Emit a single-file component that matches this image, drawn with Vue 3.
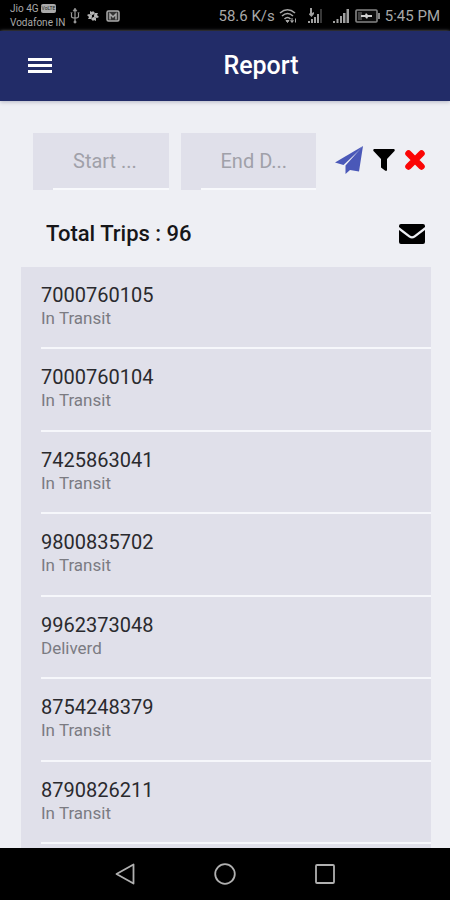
<script setup>
import { ref } from 'vue'

const startDate = ref('')
const endDate = ref('')
const trips = [
  { id: '7000760105', status: 'In Transit' },
  { id: '7000760104', status: 'In Transit' },
  { id: '7425863041', status: 'In Transit' },
  { id: '9800835702', status: 'In Transit' },
  { id: '9962373048', status: 'Deliverd' },
  { id: '8754248379', status: 'In Transit' },
  { id: '8790826211', status: 'In Transit' },
]
</script>

<template>
  <div class="screen">
    <div class="status">
      <div class="carriers">
        <div class="carrier">Jio 4G <span class="volte">VoLTE</span></div>
        <div class="carrier">Vodafone IN</div>
      </div>
      <div class="notices">
        <svg width="10" height="16" viewBox="0 0 10 16" fill="none" stroke="#999" stroke-width="1.2">
          <path d="M5 2v11M1.500 5v3.500q0 1.500 3.500 1.500t3.500-1.500V5" />
          <path d="M5 0l2 3H3zM4 13h2v2H4zM.5 4.500h2M7.500 4.500h2" fill="#999" stroke-width=".6" />
        </svg>
        <svg width="14" height="14" viewBox="0 0 14 14" fill="#b4b4b4">
          <path d="M6 6L4 5V2l2 1 1-1 2 2-2 2zM8 6l1-2h3l-1 2 2 2-2 1-3-1zM8 8l2 1v3l-2-1-1 1-2-2 2-2zM6 8l-1 2H2l1-2-2-2 2-1 3 1z" />
          <circle cx="7" cy="7" r="1.200" fill="#000" />
        </svg>
        <svg width="14" height="12" viewBox="0 0 14 12" fill="none" stroke="#aaa" stroke-width="1.500">
          <rect x="1" y="1" width="12" height="10" rx="1.500" fill="#333" />
          <path d="M4 9.500V4l3 3 3-3v5.500" />
        </svg>
      </div>
      <div class="system">
        <span>58.6 K/s</span>
        <svg width="18" height="16" viewBox="0 0 18 16" fill="none" stroke="#a8a8a8" stroke-width="1.600">
          <path d="M1 5q7.500-6.500 15 0M3 8q5.500-5 11 0M5.500 11q3-3 6 0" />
          <path d="M7 12.500h3l-1.500 2zM13 10v4M11.500 12.500L13 14.500l1.500-2M16.500 14.500v-4" stroke-width="1" fill="#a8a8a8" />
        </svg>
        <svg class="sim" width="16" height="16" viewBox="0 0 16 16" fill="#a0a0a0">
          <path d="M1 13h2v2H1zM4 11h2v4H4zM7 9h2v6H7zM10 6h2v9h-2z" />
          <path d="M13 1h2v14h-2z" fill="#383838" />
          <path d="M3 0h2v5l2-1v2L4.500 9 2 6.500V5l1 1z" />
        </svg>
        <svg class="signal" width="16" height="16" viewBox="0 0 16 16" fill="#a0a0a0">
          <path d="M0 13h2v2H0zM3.500 11h2v4h-2zM7 8h2v7H7zM10 5h2.500v10H10zM13.500 1H16v14h-2.500z" />
        </svg>
        <svg class="battery" width="26" height="14" viewBox="0 0 26 14">
          <rect x="1" y="1" width="21" height="12" rx="1" fill="#0c0c0c" stroke="#858585" stroke-width="1.600" />
          <path d="M3 3h4v8H3z" fill="#444" />
          <path d="M23 4h2v6h-2z" fill="#858585" />
          <path d="M6 6h4l1-2 2 2h4v2h-4l-1 2-2-2H6z" fill="#d0d0d0" />
        </svg>
        <span>5:45 PM</span>
      </div>
    </div>

    <header class="bar">
      <button class="icon menu" type="button" aria-label="Menu">
        <svg width="24" height="18" viewBox="0 0 24 18" fill="#fff">
          <path d="M0 1h24v3H0zM0 7h24v3H0zM0 13h24v3H0z" />
        </svg>
      </button>
      <h1>Report</h1>
    </header>

    <main>
      <form class="filters" @submit.prevent>
        <label class="date"><input v-model="startDate" type="text" placeholder="Start ..." aria-label="Start date" /></label>
        <label class="date"><input v-model="endDate" type="text" placeholder="End D..." aria-label="End date" /></label>
        <div class="actions">
          <button class="icon" type="submit" aria-label="Send">
            <svg width="28" height="28" viewBox="0 0 28 28" fill="#4a58b8">
              <path d="M28 0L0 16.500l8.500 2.500L25.500 3z" />
              <path d="M28 0L10.500 19.500V28l4.500-4 9 1.500z" />
            </svg>
          </button>
          <button class="icon" type="button" aria-label="Filter">
            <svg width="22" height="22" viewBox="0 0 22 22" fill="#000">
              <path d="M1 0h20q1.500 1 0 2.500L14 10v11q-.5 1.500-2 .5L8 18.500V10L1 2.500Q-.5 1 1 0z" />
            </svg>
          </button>
          <button class="icon" type="button" aria-label="Clear">
            <svg width="20" height="20" viewBox="0 0 20 20" stroke="#fb0505" stroke-width="6.500">
              <path d="M3.500 3.500l13 13M16.500 3.500l-13 13" stroke-linecap="round" />
            </svg>
          </button>
        </div>
      </form>

      <div class="summary">
        <h2>Total Trips : 96</h2>
        <button class="icon" type="button" aria-label="Email report">
          <svg width="26" height="20" viewBox="0 0 26 20" fill="#000">
            <path d="M2 0h22q2 0 2 2v1L15 11.500q-2 1.500-4 0L0 3V2Q0 0 2 0z" />
            <path d="M0 6l10 7.500q3 2 6 0L26 6v12q0 2-2 2H2q-2 0-2-2z" />
          </svg>
        </button>
      </div>

      <ul class="trips">
        <li v-for="trip in trips" :key="trip.id">
          <span class="number">{{ trip.id }}</span>
          <span class="state">{{ trip.status }}</span>
        </li>
      </ul>
    </main>

    <nav class="keys" aria-label="System">
      <button class="icon" type="button" aria-label="Back">
        <svg width="22" height="22" viewBox="0 0 22 22" fill="none" stroke="#b0b0b0" stroke-width="1.800" stroke-linejoin="round">
          <path d="M19.500 1.500v19L2.500 11z" />
        </svg>
      </button>
      <button class="icon" type="button" aria-label="Home">
        <svg width="22" height="22" viewBox="0 0 22 22" fill="none" stroke="#b0b0b0" stroke-width="1.800">
          <circle cx="11" cy="11" r="9.800" />
        </svg>
      </button>
      <button class="icon" type="button" aria-label="Recent apps">
        <svg width="22" height="22" viewBox="0 0 22 22" fill="none" stroke="#b0b0b0" stroke-width="1.800">
          <rect x="2" y="2" width="18" height="18" rx="1" />
        </svg>
      </button>
    </nav>
  </div>
</template>

<style>
body {
  background: #eeeff4;
}
</style>

<style scoped>
* {
  box-sizing: border-box;
}
.screen {
  display: flex;
  flex-direction: column;
  min-height: 100vh;
  background: #eeeff4;
  font-family: Roboto, sans-serif;
  color: #161618;
}
.icon {
  display: flex;
  align-items: center;
  justify-content: center;
  padding: 0;
  border: 0;
  background: none;
}
.status {
  display: flex;
  align-items: center;
  height: 31px;
  padding: 0 10px;
  background: #000;
  color: #a8a8a8;
}
.carrier {
  display: flex;
  align-items: center;
  gap: 2px;
  font-size: 10px;
  line-height: 14px;
  white-space: nowrap;
}
.volte {
  padding: 0 1px;
  border-radius: 2px;
  background: #aaa;
  color: #222;
  font-size: 5px;
  line-height: 9px;
}
.notices {
  display: flex;
  align-items: center;
  gap: 6px;
  margin-left: 5px;
}
.system {
  display: flex;
  align-items: center;
  margin-left: auto;
  font-size: 15px;
  white-space: nowrap;
}
.system svg {
  margin-left: 4px;
}
.system .sim,
.system .signal {
  margin-left: 10px;
}
.system .battery {
  margin: 0 4px 0 6px;
}
.bar {
  display: grid;
  grid-template-columns: 24px 1fr;
  gap: 20px;
  align-items: center;
  height: 70px;
  padding-left: 28px;
  background: #222c68;
  color: #fff;
  box-shadow: 0 1px 4px #b4b5c4;
}
h1,
h2 {
  margin: 0;
  font-weight: 500;
}
h1 {
  font-size: 25px;
  line-height: 32px;
  text-align: center;
}
main {
  display: flex;
  flex: 1;
  flex-direction: column;
  padding: 32px 19px 0 21px;
}
.filters {
  display: flex;
  gap: 12px;
  padding: 0 6px 0 12px;
}
.date {
  position: relative;
  flex: 1;
  min-width: 0;
  height: 57px;
  padding-bottom: 2px;
  background: #e0e0ea;
}
.date::after {
  content: '';
  position: absolute;
  right: 0;
  bottom: 0;
  left: 20px;
  height: 2px;
  background: #f8f9fc;
}
.date input {
  width: 100%;
  height: 100%;
  padding: 0 0 0 40px;
  border: 0;
  outline: 0;
  background: none;
  color: #161618;
  font: 20px Roboto, sans-serif;
}
.date input::placeholder {
  color: #a0a1a9;
  opacity: 1;
}
.actions {
  display: flex;
  align-items: center;
  gap: 10px;
  margin-left: 7px;
  padding-bottom: 4px;
}
.summary {
  display: flex;
  align-items: center;
  justify-content: space-between;
  height: 77px;
  padding: 10px 6px 0 25px;
}
h2 {
  font-size: 22px;
  line-height: 28px;
}
.trips {
  display: grid;
  flex: 1;
  grid-auto-rows: minmax(82px, 1fr);
  margin: 0;
  padding: 0 0 4px 20px;
  background: #e0e0ea;
  list-style: none;
}
.trips li {
  display: flex;
  flex-direction: column;
  padding-top: 16px;
  border-bottom: 2px solid #f6f7fb;
}
.number {
  color: #2a2a2e;
  font-size: 20px;
  line-height: 24px;
}
.state {
  color: #7b7b82;
  font-size: 17px;
  line-height: 22px;
}
.keys {
  display: flex;
  align-items: center;
  justify-content: center;
  gap: 78px;
  height: 52px;
  background: #000;
}
</style>
